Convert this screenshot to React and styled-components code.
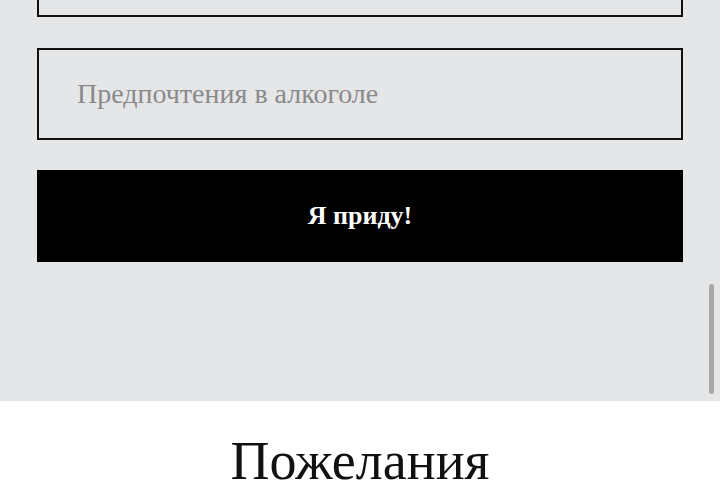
import React from 'react';
import styled, { createGlobalStyle } from 'styled-components';

const GlobalStyle = createGlobalStyle`
  html, body {
    margin: 0;
    padding: 0;
    background: #ffffff;
    overflow: hidden;
  }
  body {
    font-family: "Liberation Serif", "DejaVu Serif", serif;
  }
`;

const App = () => {
  const fields = [
    { id: 1, placeholder: 'Ваше имя' },
    { id: 2, placeholder: 'Предпочтения в алкоголе' },
  ];

  return (
    <Page>
      <GlobalStyle />
      <FormSection>
        <Form onSubmit={(e) => e.preventDefault()}>
          {fields.map((field) => (
            <Field key={field.id} placeholder={field.placeholder} />
          ))}
          <Submit type="submit">Я приду!</Submit>
        </Form>
      </FormSection>
      <WishesSection>
        <Heading>Пожелания</Heading>
      </WishesSection>
      <ScrollThumb />
    </Page>
  );
};

export default App;

const Page = styled.div`
  position: relative;
  width: 720px;
  height: 480px;
  overflow: hidden;
`;

const FormSection = styled.section`
  background: #e5e6e8;
  padding: 0 37px 139px;
  margin-top: -75px;
`;

const Form = styled.form`
  display: flex;
  flex-direction: column;
  gap: 31px;
`;

const Field = styled.input`
  box-sizing: border-box;
  width: 100%;
  height: 92px;
  border: 2px solid #111111;
  background: transparent;
  padding: 0 38px;
  font-family: "Liberation Serif", "DejaVu Serif", serif;
  font-size: 28px;
  color: #222;
  outline: none;

  &::placeholder {
    color: #8a8a8a;
  }
`;

const Submit = styled.button`
  height: 92px;
  margin-top: -1px;
  border: none;
  background: #000000;
  color: #ffffff;
  font-family: "Liberation Serif", "DejaVu Serif", serif;
  font-weight: 700;
  font-size: 26px;
  cursor: pointer;
`;

const WishesSection = styled.section`
  background: #ffffff;
  padding-top: 28px;
  display: flex;
  justify-content: center;
`;

const Heading = styled.h2`
  margin: 0;
  font-weight: 400;
  font-size: 54px;
  line-height: 64px;
  color: #111111;
`;

const ScrollThumb = styled.div`
  position: absolute;
  top: 284px;
  right: 6px;
  width: 5px;
  height: 110px;
  border-radius: 3px;
  background: #a8a8a8;
`;
